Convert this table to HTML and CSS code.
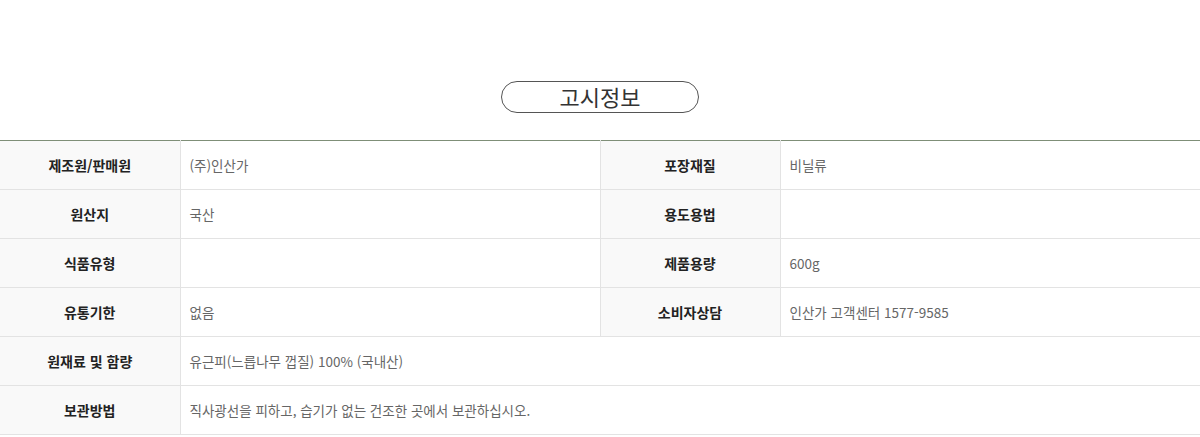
FILE: index.html
```html
<!DOCTYPE html>
<html lang="ko">
<head>
    <meta charset="UTF-8">
    <meta name="viewport" content="width=device-width, initial-scale=1.0">
    <title>고시정보</title>
    <link rel="stylesheet" href="styles.css">
</head>
<body>

<div class="notice">
    <div class="notice-head">
        <h2 class="notice-title">고시정보</h2>
    </div>

    <table class="notice-table">
        <colgroup>
            <col class="col-label">
            <col class="col-value">
            <col class="col-label">
            <col class="col-value">
        </colgroup>
        <tr>
            <th>제조원/판매원</th>
            <td>(주)인산가</td>
            <th>포장재질</th>
            <td>비닐류</td>
        </tr>
        <tr>
            <th>원산지</th>
            <td>국산</td>
            <th>용도용법</th>
            <td></td>
        </tr>
        <tr>
            <th>식품유형</th>
            <td></td>
            <th>제품용량</th>
            <td>600g</td>
        </tr>
        <tr>
            <th>유통기한</th>
            <td>없음</td>
            <th>소비자상담</th>
            <td>인산가 고객센터 1577-9585</td>
        </tr>
        <tr>
            <th>원재료 및 함량</th>
            <td colspan="3">유근피(느릅나무 껍질) 100% (국내산)</td>
        </tr>
        <tr>
            <th>보관방법</th>
            <td colspan="3">직사광선을 피하고, 습기가 없는 건조한 곳에서 보관하십시오.</td>
        </tr>
    </table>
</div>

</body>
</html>
```

FILE: styles.css
```css
body {
    margin: 0;
    padding: 0;
    background-color: #fff;
    font-family: "Noto Sans CJK KR", "Noto Sans", sans-serif;
    color: #333;
}

.notice {
    padding-top: 81px;
}

.notice-head {
    display: flex;
    justify-content: center;
    margin-bottom: 27px;
}

.notice-title {
    margin: 0;
    width: 196px;
    height: 30px;
    line-height: 29px;
    border: 1px solid #555;
    border-radius: 16px;
    text-align: center;
    font-size: 22px;
    font-weight: 400;
    color: #333;
}

.notice-table {
    width: 1200px;
    border-collapse: collapse;
    table-layout: fixed;
    border-top: 1px solid #7f8f78;
}

.col-label {
    width: 180px;
}

.col-value {
    width: 420px;
}

.notice-table th,
.notice-table td {
    height: 48px;
    padding: 0;
    border-bottom: 1px solid #e3e3e3;
    vertical-align: middle;
}

.notice-table th {
    background-color: #f9f9f9;
    font-size: 14px;
    font-weight: 700;
    color: #222;
    text-align: center;
    border-right: 1px solid #e3e3e3;
}

.notice-table td {
    padding-left: 9px;
    font-size: 13.5px;
    color: #666;
    text-align: left;
}

.notice-table td + th {
    border-left: 1px solid #e3e3e3;
}
```
